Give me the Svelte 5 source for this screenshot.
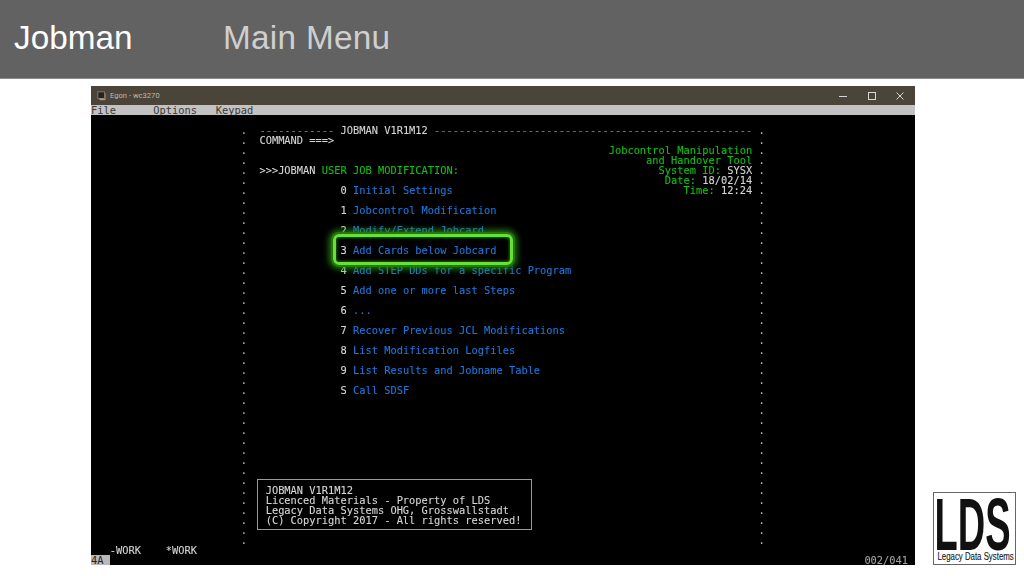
<script>
  const G = 'g', W = 'w', B = 'b';
  const dash = (n) => '-'.repeat(n);
  const items = {
    1: [[27, dash(12), G], [40, 'JOBMAN V1R1M12', W], [55, dash(51), G]],
    2: [[27, 'COMMAND ===>', W]],
    3: [[83, 'Jobcontrol Manipulation', G]],
    4: [[89, 'and Handover Tool', G]],
    5: [[27, '>>>JOBMAN ', W], [37, 'USER JOB MODIFICATION:', G], [91, 'System ID: ', G], [102, 'SYSX', W]],
    6: [[92, 'Date: ', G], [98, '18/02/14', W]],
    7: [[40, '0', W], [42, 'Initial Settings', B], [95, 'Time: ', G], [101, '12:24', W]],
    9: [[40, '1', W], [42, 'Jobcontrol Modification', B]],
    11: [[40, '2', W], [42, 'Modify/Extend Jobcard', B]],
    13: [[40, '3', W], [42, 'Add Cards below Jobcard', B]],
    15: [[40, '4', W], [42, 'Add STEP DDs for a specific Program', B]],
    17: [[40, '5', W], [42, 'Add one or more last Steps', B]],
    19: [[40, '6', W], [42, '...', B]],
    21: [[40, '7', W], [42, 'Recover Previous JCL Modifications', B]],
    23: [[40, '8', W], [42, 'List Modification Logfiles', B]],
    25: [[40, '9', W], [42, 'List Results and Jobname Table', B]],
    27: [[40, 'S', W], [42, 'Call SDSF', B]],
    37: [[28, 'JOBMAN V1R1M12', W]],
    38: [[28, 'Licenced Materials - Property of LDS', W]],
    39: [[28, 'Legacy Data Systems OHG, Grosswallstadt', W]],
    40: [[28, '(C) Copyright 2017 - All rights reserved!', W]],
    43: [[3, '-WORK', W], [12, '*WORK', W]],
    44: [[124, '002/041', 'd']]
  };

  function buildRow(n) {
    const segs = [...(items[n] || [])];
    if (n >= 1 && n <= 42) {
      segs.push([24, '.', 'dot'], [107, '.', 'dot']);
    }
    segs.sort((a, b) => a[0] - b[0]);
    let col = 0;
    const out = [];
    for (const [c, t, k] of segs) {
      if (c > col) out.push({ t: ' '.repeat(c - col), k: '' });
      out.push({ t, k });
      col = c + t.length;
    }
    return out;
  }
  const rows = Array.from({ length: 45 }, (_, n) => buildRow(n));
</script>

<div class="slide">
  <header class="head">
    <span class="title">Jobman</span>
    <span class="sub">Main Menu</span>
  </header>

  <main class="body">
    <section class="win">
      <div class="titlebar">
        <div class="tleft">
          <svg class="appicon" viewBox="0 0 12 12" width="10" height="10" aria-hidden="true">
            <rect x="1" y="1" width="8" height="8" fill="#26221e" stroke="#8d8678" />
            <rect x="3" y="9" width="7" height="2" fill="#a89f90" />
            <rect x="9" y="3" width="2" height="7" fill="#8a6a4a" />
          </svg>
          <span class="wname">Egon - wc3270</span>
        </div>
        <div class="ctrls">
          <svg viewBox="0 0 10 10" width="10" height="10" aria-hidden="true"><path d="M1 5.5H9" stroke="#d5d5d5" stroke-width="1" /></svg>
          <svg viewBox="0 0 10 10" width="10" height="10" aria-hidden="true"><rect x="1.5" y="1.5" width="7" height="7" fill="none" stroke="#d5d5d5" /></svg>
          <svg viewBox="0 0 10 10" width="10" height="10" aria-hidden="true"><path d="M1.5 1.5L8.5 8.5M8.5 1.5L1.5 8.5" stroke="#d5d5d5" stroke-width="1" /></svg>
        </div>
      </div>
      <div class="menubar">File      Options   Keypad</div>
      <div class="term">
        {#each rows as row}
          <div class="row">{#each row as s}<span class={s.k}>{s.t}</span>{/each}</div>
        {/each}
        <div class="cursor">4A</div>
        <div class="infobox"></div>
        <div class="hilite"></div>
      </div>
    </section>

    <div class="logo">
      <svg viewBox="0 0 83 73" width="83" height="73" role="img" aria-label="LDS Legacy Data Systems">
        <rect x="0.5" y="0.5" width="82" height="72" fill="#fff" stroke="#666" />
        <text transform="translate(1.5 58) scale(0.514 1)" class="lds">LDS</text>
        <text transform="translate(4.5 68) scale(0.785 1)" class="tag">Legacy Data Systems</text>
      </svg>
    </div>
  </main>
</div>

<style>
  :global(body) {
    margin: 0;
    background: #fff;
  }
  .slide {
    width: 1024px;
    height: 576px;
    overflow: hidden;
    display: flex;
    flex-direction: column;
    font-family: "Liberation Sans", Arial, sans-serif;
  }
  .head {
    flex: none;
    height: 79px;
    box-sizing: border-box;
    background: #626262;
    border-bottom: 1px solid #8c8c8c;
    display: flex;
    align-items: center;
    padding: 0 0 3px 14px;
    font-size: 33.3px;
    line-height: 1;
  }
  .title {
    width: 209px;
    color: #fff;
  }
  .sub {
    color: #cfcfcf;
    letter-spacing: 0.3px;
  }
  .body {
    flex: 1;
    display: flex;
    align-items: flex-end;
    padding: 0 8px 11px 91px;
    justify-content: space-between;
  }
  .win {
    width: 824px;
    height: 479px;
    display: flex;
    flex-direction: column;
    background: #000;
  }
  .titlebar {
    flex: none;
    height: 19px;
    background: #4a4439;
    display: flex;
    align-items: center;
    justify-content: space-between;
    padding: 0 10px 0 6px;
  }
  .tleft {
    display: flex;
    align-items: center;
    gap: 3px;
  }
  .wname {
    color: #bdb9b0;
    font-family: Roboto, "Liberation Sans", sans-serif;
    font-size: 7.6px;
  }
  .ctrls {
    display: flex;
    gap: 18.5px;
  }
  .menubar {
    flex: none;
    height: 10px;
    background: #c2c2c2;
    color: #3a3a3a;
    font-family: "DejaVu Sans Mono", monospace;
    font-size: 10.36px;
    line-height: 10px;
    white-space: pre;
  }
  .term {
    flex: 1;
    position: relative;
    background: #000;
    font-family: "DejaVu Sans Mono", monospace;
    font-size: 10.36px;
    line-height: 10px;
    white-space: pre;
    color: #d4d4d4;
    overflow: hidden;
  }
  .row {
    height: 10px;
    filter: blur(0.4px);
    -webkit-text-stroke: 0.1px currentColor;
  }
  .g { color: #12c012; }
  .w { color: #d6d6d6; }
  .b { color: #1f78dc; }
  .d { color: #a0a0a0; }
  .dot { color: #b8b8b8; }
  .cursor {
    position: absolute;
    left: 0;
    bottom: 0;
    width: 19px;
    height: 10px;
    background: #b9b9b9;
    color: #222;
  }
  .infobox {
    position: absolute;
    left: 166px;
    top: 364px;
    width: 273px;
    height: 49px;
    border: 1.5px solid #9a9a9a;
  }
  .hilite {
    position: absolute;
    left: 242px;
    top: 119px;
    width: 174px;
    height: 25px;
    border: 3px solid #68e034;
    border-radius: 6px;
    box-shadow:
      0 0 0 2px rgba(36, 120, 16, 0.95),
      0 0 6px 4px rgba(45, 150, 20, 0.8),
      inset 0 0 3px 1px rgba(40, 140, 20, 0.75);
  }
  .logo {
    width: 83px;
    height: 73px;
  }
  .logo svg {
    display: block;
    overflow: visible;
  }
  .lds {
    font-family: "Liberation Sans", sans-serif;
    font-size: 74px;
    font-weight: 700;
    fill: #111;
  }
  .tag {
    font-family: "Liberation Sans", sans-serif;
    font-size: 10px;
    fill: #222;
    stroke: #222;
    stroke-width: 0.15px;
  }
</style>
